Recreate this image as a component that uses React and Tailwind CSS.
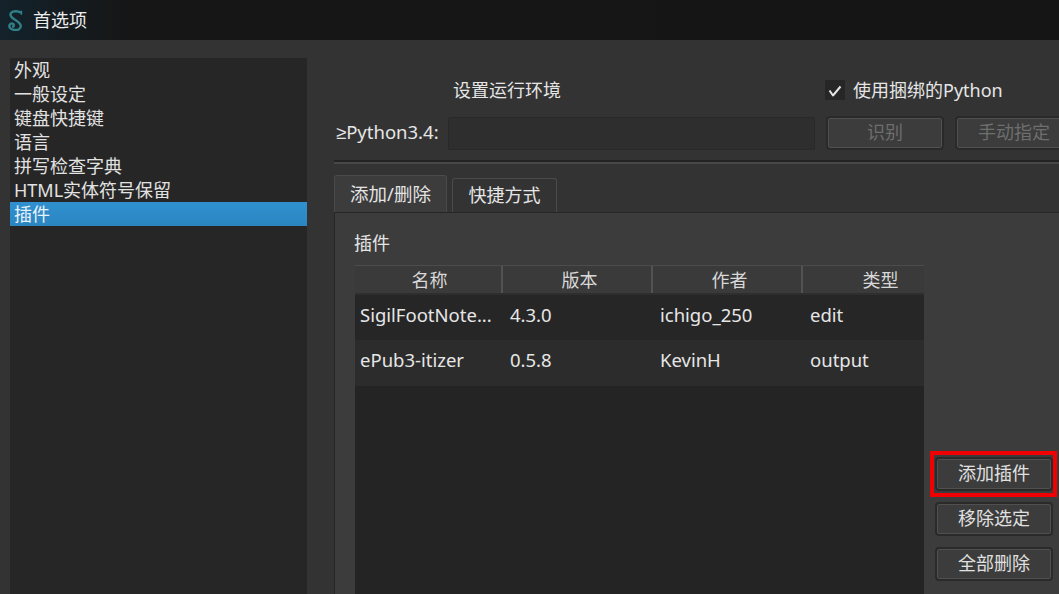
import React from 'react';

const font = { fontFamily: '"Noto Sans", "Noto Sans CJK SC", sans-serif' };

const navItems = ['外观', '一般设定', '键盘快捷键', '语言', '拼写检查字典', 'HTML实体符号保留', '插件'];

const columns = [
  { label: '名称', width: 'w-[148px] pl-[3px]' },
  { label: '版本', width: 'w-[150px] pl-[5px]' },
  { label: '作者', width: 'w-[150px] pl-[5px]' },
  { label: '类型', width: 'w-[121px] pl-[34px]' },
];

const plugins = [
  { name: 'SigilFootNote...', version: '4.3.0', author: 'ichigo_250', type: 'edit', bg: 'bg-[#262626] h-[45px]' },
  { name: 'ePub3-itizer', version: '0.5.8', author: 'KevinH', type: 'output', bg: 'bg-[#2c2c2c] h-[46px]' },
];

function SigilLogo() {
  return (
    <svg width="15" height="21" viewBox="0 0 15 21" fill="none" stroke="#2f8088" strokeLinecap="round">
      <path d="M13 2.6C10 .8 5 .8 3.2 2.8 1.4 5 3.2 7.2 6.2 9.2c3.2 2 6.6 3.8 6.6 6.9 0 2.9-2.8 4.2-6 3.9C3.4 19.7 1.1 18 1.3 15.8c.2-1.9 2.3-2.8 3.7-2 1.2.8 1.1 2.4 0 2.9" strokeWidth="2.4" />
      <path d="M13.4 1.2v3" strokeWidth="1.4" />
    </svg>
  );
}

function CheckMark() {
  return (
    <svg width="20" height="20" viewBox="0 0 20 20" fill="none" stroke="#e4e4e4" strokeWidth="2" strokeLinejoin="round">
      <path d="M4.5 10.5 8 15.5 15.5 6.5" />
    </svg>
  );
}

function ActionButton({ children, disabled, className = '' }) {
  return (
    <button
      disabled={disabled}
      className={`flex shrink-0 items-center justify-center rounded-[4px] border-2 border-[#2a2a2a] bg-[#3c3c3c] pb-[2px] text-[18px] leading-none shadow-[inset_0_0_0_1px_#505050] ${
        disabled ? 'text-[#6e6e6e]' : 'text-[#e0e0e0]'
      } ${className}`}
    >
      {children}
    </button>
  );
}

export default function App() {
  return (
    <div style={font} className="flex h-[594px] w-[1059px] flex-col overflow-hidden bg-[#333333] text-[18px] text-[#e6e6e6]">
      <div className="flex h-10 shrink-0 items-center gap-[10px] bg-[linear-gradient(90deg,#13222b_0%,#161616_12%,#151515_100%)] pl-2">
        <SigilLogo />
        <span className="text-[18px] leading-none text-[#ececec]">首选项</span>
      </div>

      <div className="flex min-h-0 flex-1">
        <div className="ml-[10px] mt-[18px] w-[297px] shrink-0 bg-[#262626]">
          {navItems.map((item) => (
            <div
              key={item}
              className={`h-6 pl-1 text-[18px] leading-6 ${
                item === '插件' ? 'bg-[linear-gradient(180deg,#3090d0,#2b86c0)] text-[#e8f2fa]' : 'text-[#e2e2e2]'
              }`}
            >
              {item}
            </div>
          ))}
        </div>

        <div className="ml-[27px] flex min-w-0 flex-1 flex-col">
          <div className="mt-10 flex h-5 items-center">
            <span className="ml-[119px] w-[372px] leading-[18px]">设置运行环境</span>
            <span className="flex h-5 w-5 items-center justify-center bg-[#262626]">
              <CheckMark />
            </span>
            <span className="ml-2 leading-[18px] whitespace-nowrap">使用捆绑的Python</span>
          </div>

          <div className="mt-4 flex h-[34px] items-center">
            <span className="ml-[2px] w-[112px] shrink-0 text-[18.5px] leading-none whitespace-nowrap">
              <span className="font-['Liberation_Sans']">≥</span>Python3.4:
            </span>
            <div className="h-[33px] w-[367px] shrink-0 rounded-[2px] border border-[#292929] bg-[#2e2e2e]" />
            <ActionButton disabled className="ml-[11px] h-[34px] w-[118px]">识别</ActionButton>
            <ActionButton disabled className="ml-[11px] h-[34px] w-[118px]">手动指定</ActionButton>
          </div>

          <div className="mt-[10px] h-[4px] border-t-2 border-b-2 border-t-[#232323] border-b-[#484848]" />

          <div className="mt-[11px] flex h-[37px] items-end">
            <div className="flex h-[37px] w-[113px] items-center justify-center rounded-t-[3px] border border-b-0 border-[#4a4a4a] bg-[#3c3c3c] text-[18.5px] text-[#e4e4e4]">添加/删除</div>
            <div className="ml-[5px] flex h-[34px] w-[105px] items-center justify-center rounded-t-[3px] border border-b-0 border-[#4a4a4a] bg-[#333333]">快捷方式</div>
          </div>

          <div className="flex min-h-0 flex-1 border-l border-t border-l-[#262626] border-t-[#262626] bg-[#3c3c3c]">
            <div className="flex w-[589px] shrink-0 flex-col pl-[20px]">
              <div className="mt-[17px] -ml-px h-[35px] text-[#e4e4e4]">插件</div>
              <div className="flex-1 bg-[#242424]">
                <div className="flex h-[30px] border-t border-b-2 border-t-[#4c4c4c] border-b-[#2e2e2e] bg-[#3a3a3a] text-[#d8d8d8]">
                  {columns.map((col, i) => (
                    <div
                      key={col.label}
                      className={`flex items-center justify-center leading-none ${col.width} ${i < 3 ? 'border-r-2 border-r-[#525252]' : ''}`}
                    >
                      {col.label}
                    </div>
                  ))}
                </div>
                {plugins.map((row) => (
                  <div key={row.name} className={`flex items-center pb-[6px] text-[18.5px] text-[#e6e6e6] ${row.bg}`}>
                    <div className="w-[148px] pl-[5px] whitespace-nowrap">{row.name}</div>
                    <div className="w-[150px] pl-[7px]">{row.version}</div>
                    <div className="w-[150px] pl-[7px]">{row.author}</div>
                    <div className="w-[121px] pl-[7px]">{row.type}</div>
                  </div>
                ))}
              </div>
            </div>

            <div className="ml-[11px] flex flex-col gap-[11px] pt-[244px]">
              <div className="-my-[6px] -ml-[5px] -mr-[4px] w-fit border-[4px] border-[#f00000] py-[2px] pl-[1px]">
                <ActionButton className="h-[34px] w-[118px]">添加插件</ActionButton>
              </div>
              <ActionButton className="h-[34px] w-[118px]">移除选定</ActionButton>
              <ActionButton className="h-[34px] w-[118px]">全部删除</ActionButton>
            </div>
          </div>
        </div>
      </div>
    </div>
  );
}
